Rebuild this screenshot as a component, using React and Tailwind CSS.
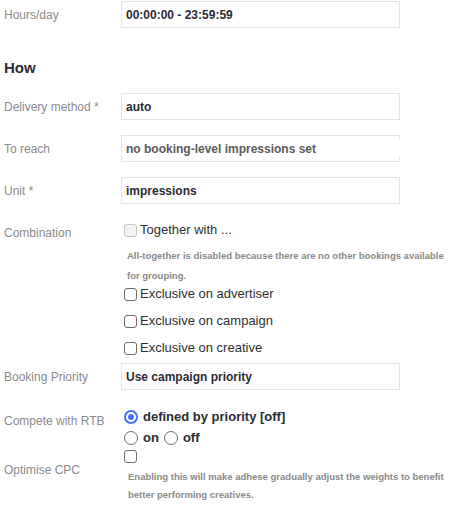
import React from 'react';

const font = { fontFamily: '"Liberation Sans", Arial, Helvetica, sans-serif' };

const Label = ({ children, className = '' }) => (
  <div className={`w-[117px] shrink-0 text-[12px] leading-[16px] text-[#8a8a8a] ${className}`}>{children}</div>
);

const Box = ({ children, muted, broken }) => (
  <div
    className={`relative w-[279px] h-[27px] flex items-center px-[4px] border border-[#e4e4e4] text-[12px] font-bold ${
      muted ? 'text-[#5a5a5a]' : 'text-[#2b2c33]'
    } ${broken ? 'border-r-0' : ''}`}
  >
    {children}
    {broken && (
      <>
        <span className="absolute right-0 top-0 w-px h-[4px] bg-[#e4e4e4]" />
        <span className="absolute right-0 bottom-0 w-px h-[4px] bg-[#e4e4e4]" />
      </>
    )}
  </div>
);

const Check = ({ disabled }) => (
  <span
    className={`inline-block w-[13px] h-[13px] rounded-[3px] border shrink-0 ${
      disabled ? 'border-[#c4c4c4] bg-[#f2f2f2]' : 'border-[#6e6e6e] bg-white'
    }`}
  />
);

const Radio = ({ checked }) =>
  checked ? (
    <span className="w-[14px] h-[14px] rounded-full border-[2px] border-[#4470f5] flex items-center justify-center shrink-0">
      <span className="w-[6px] h-[6px] rounded-full bg-[#4470f5]" />
    </span>
  ) : (
    <span className="w-[14px] h-[14px] rounded-full border border-[#6a6a6a] bg-white shrink-0" />
  );

const FormRow = ({ label, children }) => (
  <div className="flex items-center">
    <Label>{label}</Label>
    {children}
  </div>
);

export default function App() {
  return (
    <div style={font} className="w-[452px] h-[508px] bg-white pl-[4px] pt-[1px] overflow-hidden">
      <FormRow label="Hours/day">
        <Box>00:00:00 - 23:59:59</Box>
      </FormRow>

      <h3 className="mt-[31px] text-[15px] leading-[18px] font-bold text-[#2b2c33]">How</h3>

      <div className="mt-[16px] flex flex-col gap-[15px]">
        <FormRow label="Delivery method *">
          <Box>auto</Box>
        </FormRow>
        <FormRow label="To reach">
          <Box muted broken>no booking-level impressions set</Box>
        </FormRow>
        <FormRow label="Unit *">
          <Box>impressions</Box>
        </FormRow>
      </div>

      <div className="mt-[18px] flex">
        <Label className="pt-[3px]">Combination</Label>
        <div className="flex flex-col pl-[3px]">
          <label className="flex items-center gap-[3px] h-[16px] text-[13px] text-[#2f2f2f]">
            <Check disabled />
            <span>Together with ...</span>
          </label>
          <div className="mt-[8px] text-[9.5px] leading-[20px] font-bold text-[#8a8a8a] pl-[3px] whitespace-nowrap">
            <div>All-together is disabled because there are no other bookings available</div>
            <div>for grouping.</div>
          </div>
          <div className="flex flex-col gap-[11px]">
            {['Exclusive on advertiser', 'Exclusive on campaign', 'Exclusive on creative'].map(t => (
              <label key={t} className="flex items-center gap-[3px] h-[16px] text-[13px] text-[#2f2f2f]">
                <Check />
                <span>{t}</span>
              </label>
            ))}
          </div>
        </div>
      </div>

      <div className="mt-[7px]">
        <FormRow label="Booking Priority">
          <Box>Use campaign priority</Box>
        </FormRow>
      </div>

      <div className="mt-[19px] flex">
        <Label className="pt-[4px]">Compete with RTB</Label>
        <div className="flex flex-col gap-[5px] pl-[3px] text-[13px] font-bold text-[#2b2c33]">
          <label className="flex items-center gap-[5px] h-[16px]">
            <Radio checked />
            <span>defined by priority [off]</span>
          </label>
          <div className="flex items-center h-[16px]">
            <label className="flex items-center gap-[5px]">
              <Radio />
              <span>on</span>
            </label>
            <label className="flex items-center gap-[5px] ml-[5px]">
              <Radio />
              <span>off</span>
            </label>
          </div>
        </div>
      </div>

      <div className="mt-[2px] flex">
        <Label className="pt-[14px]">Optimise CPC</Label>
        <div className="flex flex-col pl-[3px]">
          <div className="flex items-center h-[16px]">
            <Check />
          </div>
          <div className="mt-[4px] text-[9.5px] leading-[18px] font-bold text-[#8a8a8a] pl-[4px] whitespace-nowrap">
            <div>Enabling this will make adhese gradually adjust the weights to benefit</div>
            <div>better performing creatives.</div>
          </div>
        </div>
      </div>
    </div>
  );
}
